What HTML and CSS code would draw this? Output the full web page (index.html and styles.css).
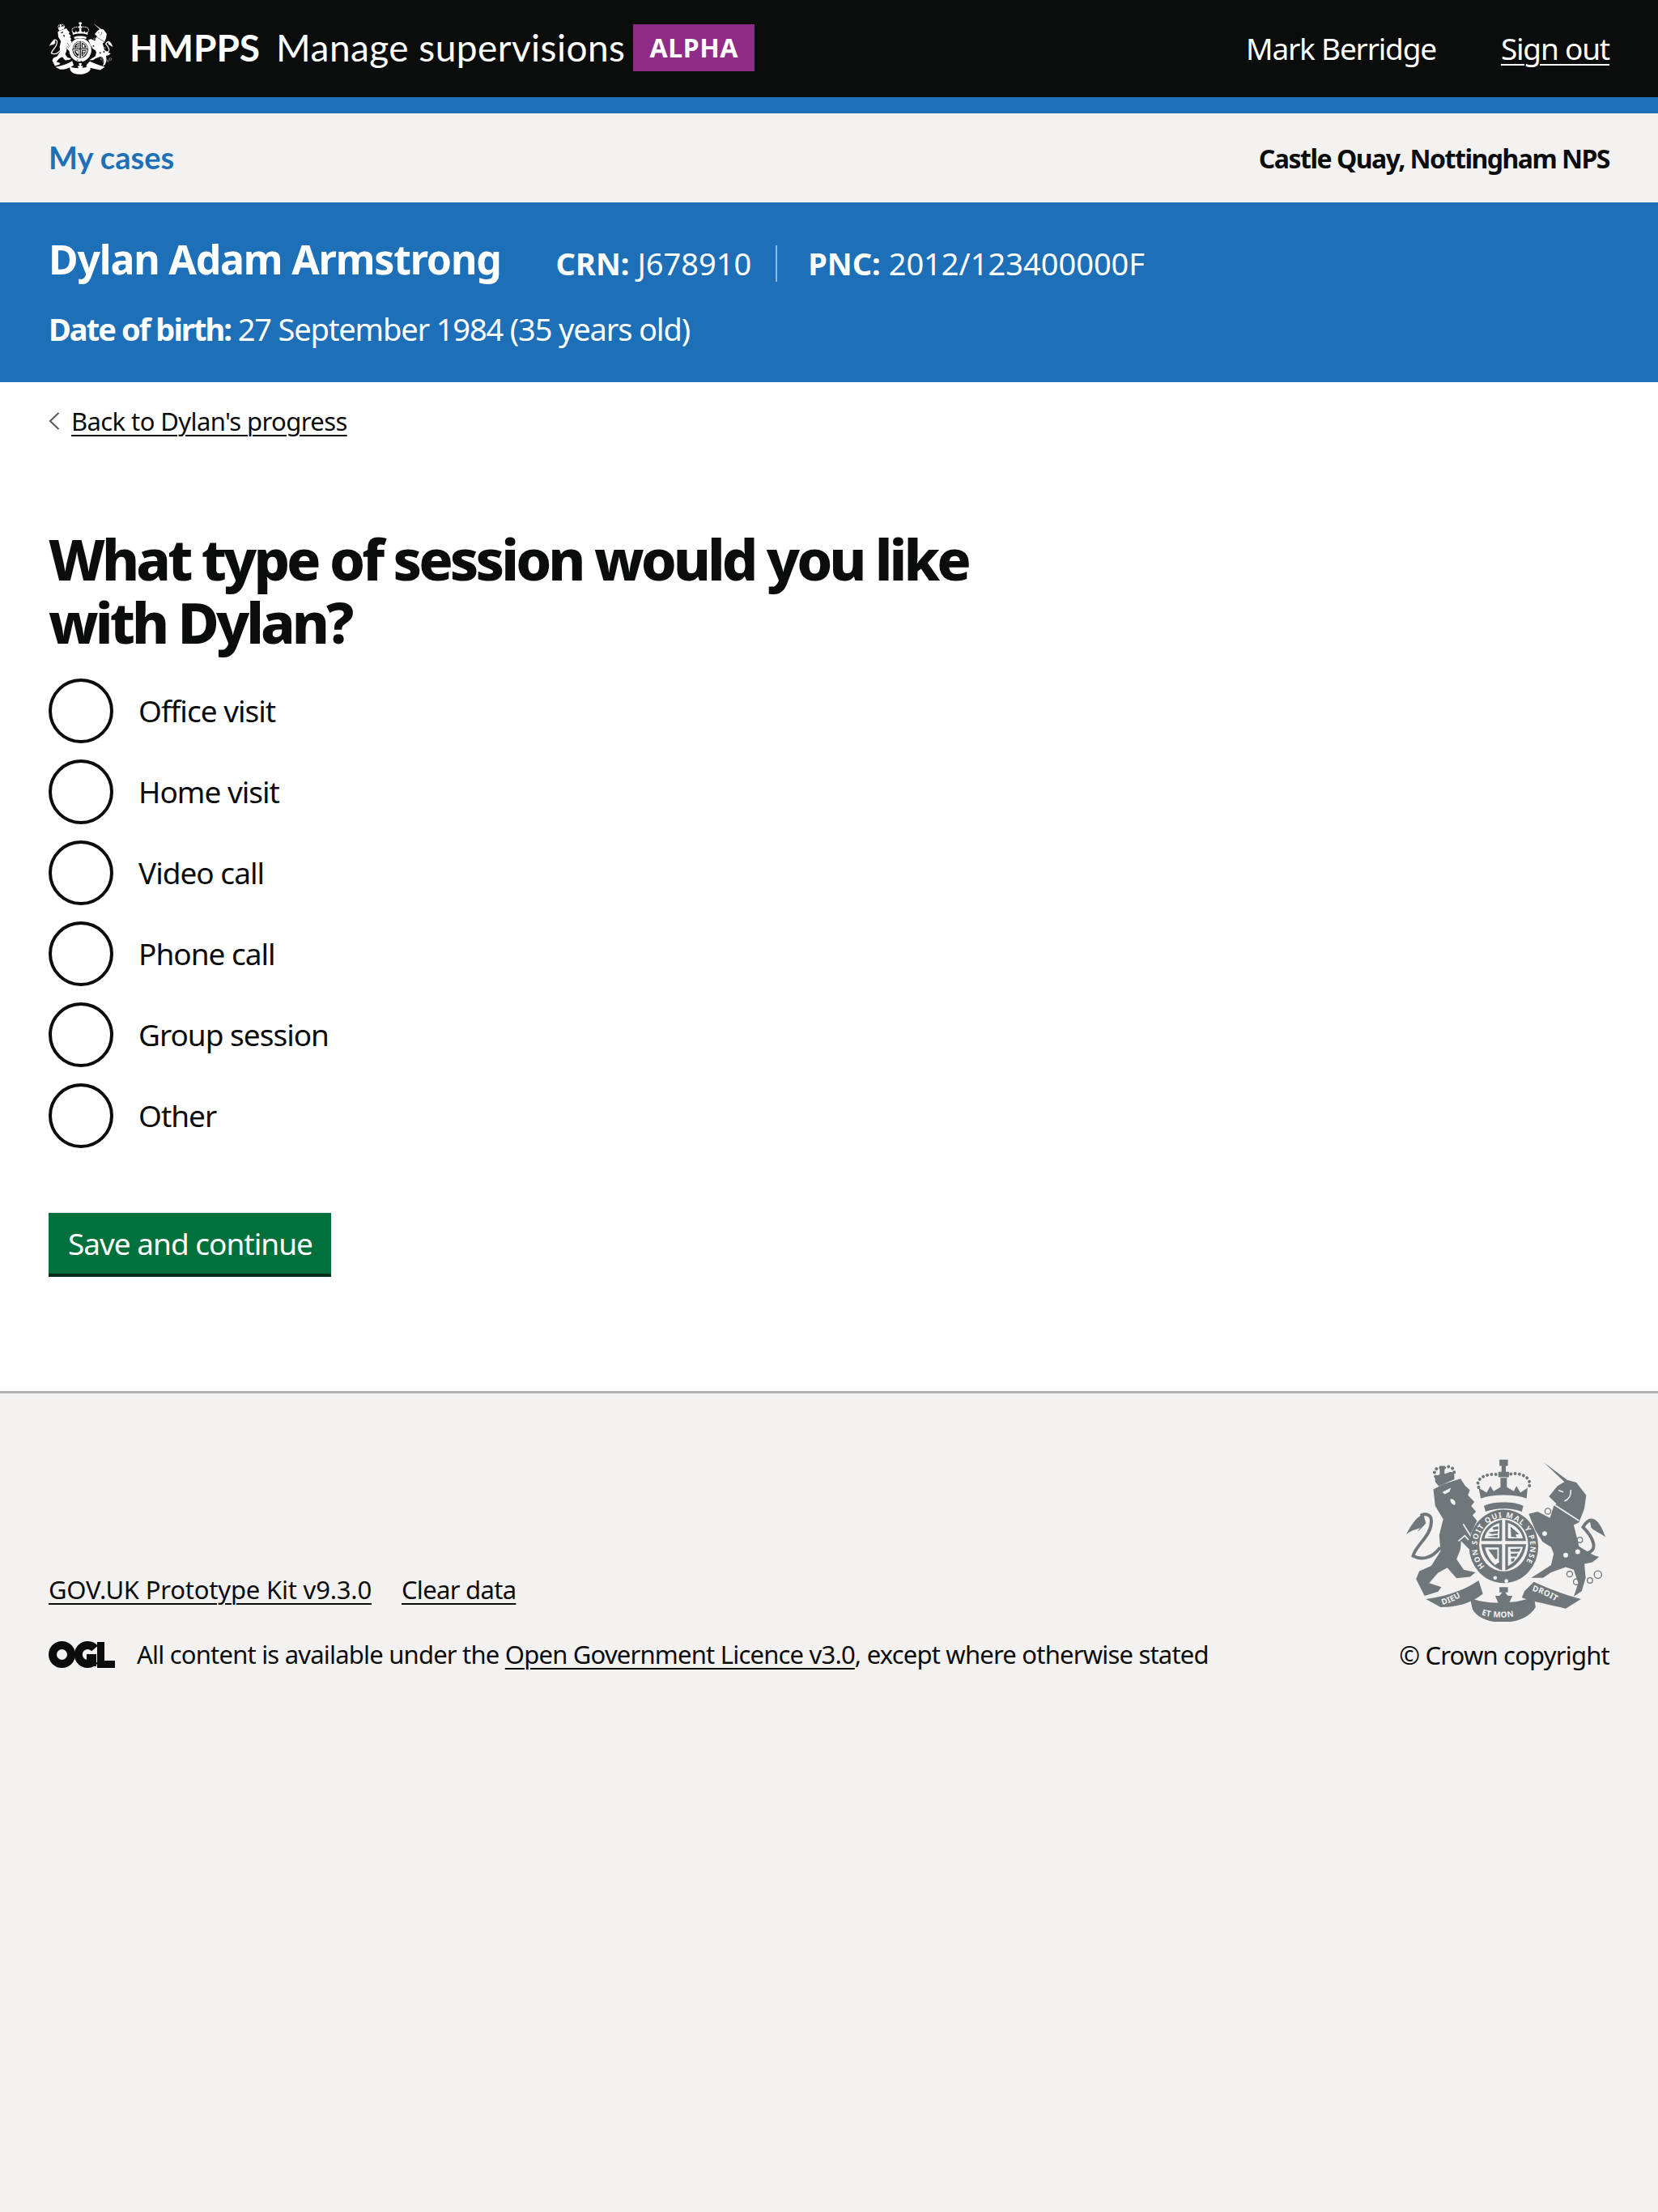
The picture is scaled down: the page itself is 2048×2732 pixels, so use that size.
FILE: index.html
```html
<!DOCTYPE html>
<html lang="en">
<head>
    <meta charset="UTF-8">
    <meta name="viewport" content="width=device-width, initial-scale=1.0">
    <title>What type of session would you like with Dylan?</title>
    <link rel="stylesheet" href="styles.css">
</head>
<body>
    <svg class="defs" width="0" height="0" aria-hidden="true">
        <defs>
            <g id="crest-shapes">
                <!-- lion -->
                <path d="M198 178 L232 160 L300 138 L318 165 L335 180 L328 200 L352 225 L340 240 L358 262 L345 275 L362 296 L338 345 L368 395 L362 422 L332 402 L302 372 L300 402 L285 440 L312 480 L356 490 L336 506 L285 512 L250 472 L215 492 L182 530 L228 545 L216 562 L165 578 L133 515 L145 485 L190 465 L225 410 L220 350 L235 290 L205 240 Z"/>
                <path class="crest-line" d="M224 396 C190 442 150 442 122 428 C130 388 196 350 190 292 C188 270 165 268 150 276"/>
                <path d="M160 270 C130 285 110 320 96 347 C118 330 135 330 150 322 C128 345 140 340 170 305 Z"/>
                <path class="crest-dots" d="M206 130 C190 100 225 90 235 100 C250 85 285 95 274 125"/>
                <path d="M222 90 H240 V120 L262 112 L276 116 L277 140 L218 166 L205 150 L204 128 L222 122 Z"/>
                <path class="crest-cut" d="M232 188 L264 172 L258 188 L240 196 Z M262 214 C272 212 284 222 280 236 C270 238 260 226 262 214 Z"/>
                <path class="crest-cut-line" d="M310 308 L362 392 M292 372 L316 352 L330 368"/>
                <!-- crown -->
                <path d="M446 66 H478 V90 H470 V120 H454 V90 H446 Z"/>
                <path d="M442 112 H482 V132 H442 Z"/>
                <path class="crest-dots" d="M368 170 C350 130 420 112 450 126 M474 126 C510 106 575 130 556 172"/>
                <path d="M450 135 H474 V170 L500 185 L510 165 L525 190 L552 172 L548 212 C500 195 425 195 376 212 L368 172 L398 190 L412 165 L424 185 L450 170 Z"/>
                <path d="M388 240 C420 222 505 222 536 240 L530 262 C495 246 430 246 394 262 Z"/>
                <!-- garter and shield -->
                <ellipse cx="462" cy="392" rx="130" ry="138"/>
                <ellipse class="crest-cut" cx="462" cy="386" rx="92" ry="100"/>
                <path d="M378 372 C382 330 415 298 456 292 V372 Z M468 292 C510 298 542 330 546 372 H468 Z M378 384 H456 V482 C415 470 382 430 378 384 Z M468 384 H546 C542 430 510 470 468 482 Z"/>
                <path class="crest-cut" d="M390 362 C394 335 418 312 446 304 V362 Z M478 304 C505 312 530 335 534 362 H478 Z M478 394 H534 C528 425 505 452 478 466 Z"/>
                <path d="M404 340 L440 334 V344 L418 346 Z M398 356 L440 348 V358 Z M420 322 L442 316 V328 L424 330 Z M488 318 L520 346 L506 348 L512 358 L490 356 Z M486 402 L526 400 L520 412 L490 412 Z M488 420 L516 418 L510 430 L490 430 Z M490 438 L504 436 L500 448 L490 450 Z"/>
                <path class="crest-cut" d="M392 396 H444 V452 L430 462 C410 445 396 420 392 396 Z"/>
                <path class="crest-cut-line" d="M400 396 L444 452"/>
                <path d="M404 404 L432 442 L438 436 V404 Z"/>
                <circle class="crest-cut" cx="430" cy="510" r="7"/>
                <circle class="crest-cut" cx="472" cy="522" r="7"/>
                <!-- unicorn -->
                <path d="M612 76 L700 142 L735 152 L772 200 L765 250 L745 302 L725 312 L745 392 L800 425 L820 432 L795 452 L765 458 L770 510 L755 560 L725 580 L742 530 L725 480 L695 470 L640 490 L610 510 L565 510 L598 490 L640 462 L650 420 L640 395 L608 375 L580 330 L556 270 L590 262 L636 285 L650 240 L660 232 L632 205 L664 165 L690 150 Z"/>
                <path class="crest-line" d="M765 420 C830 410 790 350 760 320 C790 270 815 300 832 342"/>
                <path d="M785 292 C810 290 830 320 845 358 C825 340 800 335 790 320 Z"/>
                <path class="crest-cut-line" d="M652 236 L745 296 M668 182 L686 188 M690 222 C706 216 716 200 714 180"/>
                <circle class="crest-ring" cx="628" cy="260" r="11"/>
                <circle class="crest-hole" cx="616" cy="344" r="11"/>
                <circle class="crest-hole" cx="748" cy="368" r="10"/>
                <circle class="crest-ring" cx="710" cy="496" r="11"/>
                <circle class="crest-ring" cx="735" cy="525" r="11"/>
                <circle class="crest-ring" cx="786" cy="520" r="10"/>
                <circle class="crest-ring" cx="816" cy="498" r="14"/>
                <circle class="crest-cut" cx="695" cy="425" r="9"/>
                <circle class="crest-cut" cx="740" cy="412" r="9"/>
                <!-- motto scroll -->
                <path d="M170 590 C240 580 310 560 368 520 L384 570 C345 600 300 620 225 620 Z"/>
                <path d="M335 582 C370 612 540 612 575 575 L582 620 C540 695 380 695 345 628 Z"/>
                <path d="M540 560 L575 525 C620 545 680 570 752 590 L695 626 C640 612 570 600 530 585 Z"/>
                <path d="M446 545 H478 V565 H446 Z M462 558 L478 578 L495 578 L480 610 L462 622 L444 610 L430 578 L446 578 Z"/>
            </g>
        </defs>
    </svg>

    <header class="top-bar">
        <div class="logo">
            <svg class="logo-crest" viewBox="90 55 760 620" aria-hidden="true"><use href="#crest-shapes"/></svg>
            <span class="logo-org">HMPPS</span>
            <span class="logo-service">Manage supervisions</span>
            <strong class="tag">ALPHA</strong>
        </div>
        <nav class="account">
            <span>Mark Berridge</span>
            <a href="#">Sign out</a>
        </nav>
    </header>

    <div class="sub-nav">
        <a class="sub-nav-link" href="#">My cases</a>
        <strong class="sub-nav-team">Castle Quay, Nottingham NPS</strong>
    </div>

    <section class="person">
        <div class="person-row">
            <h2 class="person-name">Dylan Adam Armstrong</h2>
            <p class="person-crn"><strong>CRN:</strong> J678910</p>
            <p class="person-pnc"><strong>PNC:</strong> 2012/123400000F</p>
        </div>
        <p class="person-dob"><strong>Date of birth:</strong> 27 September 1984 (35 years old)</p>
    </section>

    <main class="page">
        <a class="back-link" href="#">
            <svg class="back-icon" viewBox="0 0 14 22" aria-hidden="true"><path d="M12.5 1 L2 11 L12.5 21"/></svg>
            <span>Back to Dylan's progress</span>
        </a>

        <form>
            <h1 class="question">What type of session would you like with Dylan?</h1>
            <div class="radios">
                <label class="radio"><input type="radio" name="type"> Office visit</label>
                <label class="radio"><input type="radio" name="type"> Home visit</label>
                <label class="radio"><input type="radio" name="type"> Video call</label>
                <label class="radio"><input type="radio" name="type"> Phone call</label>
                <label class="radio"><input type="radio" name="type"> Group session</label>
                <label class="radio"><input type="radio" name="type"> Other</label>
            </div>
            <button class="button" type="button">Save and continue</button>
        </form>
    </main>

    <footer class="footer">
        <div class="footer-meta">
            <div class="footer-links">
                <a href="#">GOV.UK Prototype Kit v9.3.0</a>
                <a href="#">Clear data</a>
            </div>
            <div class="licence">
                <svg class="ogl" viewBox="0 0 82 33" aria-hidden="true">
                    <circle cx="16.5" cy="16.5" r="11.5" fill="none" stroke="#0b0c0c" stroke-width="10"/>
                    <path d="M57 9 A11.5 11.5 0 1 0 57 24" fill="none" stroke="#0b0c0c" stroke-width="10"/>
                    <path d="M47 16 H59 V31 H47 Z M60 1 H69 V24 H82 V33 H60 Z" fill="#0b0c0c"/>
                </svg>
                <span>All content is available under the <a href="#">Open Government Licence v3.0</a>, except where otherwise stated</span>
            </div>
        </div>
        <div class="copyright">
            <svg class="footer-crest" viewBox="90 55 760 620" aria-hidden="true">
                <use href="#crest-shapes"/>
                <defs>
                    <path id="garter-arc" d="M391 468 A100 108 0 1 1 533 468"/>
                    <path id="dieu-arc" d="M232 612 C275 600 310 580 342 550"/>
                    <path id="mon-arc" d="M378 648 C420 664 500 664 548 640"/>
                    <path id="droit-arc" d="M568 558 C610 570 650 590 682 616"/>
                </defs>
                <text class="crest-text crest-garter"><textPath href="#garter-arc" textLength="470">HON SOIT QUI MAL Y PENSE</textPath></text>
                <text class="crest-text"><textPath href="#dieu-arc">DIEU</textPath></text>
                <text class="crest-text"><textPath href="#mon-arc">ET MON</textPath></text>
                <text class="crest-text"><textPath href="#droit-arc">DROIT</textPath></text>
            </svg>
            <span>© Crown copyright</span>
        </div>
    </footer>
</body>
</html>
```

FILE: styles.css
```css
* {
    box-sizing: border-box;
}

body {
    margin: 0;
    min-height: 2732px;
    background: #f3f2f1;
    color: #0b0c0c;
    font-family: "Noto Sans", Arial, sans-serif;
    font-size: 37px;
    line-height: 50px;
    letter-spacing: -1px;
    display: flex;
    flex-direction: column;
}

a {
    color: inherit;
    text-underline-offset: 5px;
    text-decoration-thickness: 2px;
}

.defs {
    position: absolute;
}

/* top bar */
.top-bar {
    height: 140px;
    padding: 0 60px;
    background: #0b0c0c;
    border-bottom: 20px solid #1d70b8;
    color: #fff;
    display: flex;
    justify-content: space-between;
    align-items: center;
}

.logo {
    display: flex;
    align-items: center;
    padding-bottom: 2px;
    letter-spacing: 0;
}

.logo-crest {
    width: 80px;
    height: 68px;
    fill: currentColor;
    margin-right: 20px;
    --crest-cut: #0b0c0c;
    --crest-ink: #fff;
}

.logo-org {
    font-family: Lato, sans-serif;
    font-weight: 700;
    font-size: 46px;
    margin-right: 20px;
}

.logo-service {
    font-family: Lato, sans-serif;
    font-size: 46px;
    letter-spacing: 0.45px;
    margin-right: 10px;
}

.tag {
    background: #912b88;
    height: 58px;
    padding: 0 20px;
    font-size: 32px;
    letter-spacing: 0.6px;
    line-height: 58px;
}

.account {
    display: flex;
    gap: 80px;
    letter-spacing: -1.2px;
}

/* crest pieces */
.crest-line {
    fill: none;
    stroke: var(--crest-ink);
    stroke-width: 12;
}

.crest-dots {
    fill: none;
    stroke: var(--crest-ink);
    stroke-width: 12;
    stroke-linecap: round;
    stroke-dasharray: 0.1 16;
}

.crest-cut {
    fill: var(--crest-cut);
}

.crest-cut-line {
    fill: none;
    stroke: var(--crest-cut);
    stroke-width: 5;
}

.crest-ring {
    fill: none;
    stroke: var(--crest-ink);
    stroke-width: 4;
}

.crest-hole {
    fill: var(--crest-cut);
    stroke: var(--crest-ink);
    stroke-width: 4;
}

.crest-text {
    fill: #f3f2f1;
    font-size: 30px;
    font-family: "Noto Sans", sans-serif;
    font-weight: 700;
    letter-spacing: 1px;
}

.crest-garter {
    font-size: 28px;
    letter-spacing: 0;
}

/* case nav */
.sub-nav {
    height: 110px;
    padding: 0 60px;
    background: #f3f2f1;
    display: flex;
    justify-content: space-between;
    align-items: center;
}

.sub-nav-link {
    margin-bottom: 2px;
    font-family: Lato, sans-serif;
    font-weight: 700;
    font-size: 38px;
    letter-spacing: 0;
    color: #1d70b8;
    text-decoration: none;
}

.sub-nav-team {
    margin-top: 2px;
    font-size: 32px;
    letter-spacing: -1.5px;
}

/* person banner */
.person {
    height: 222px;
    padding: 40px 60px 0;
    background: #1d70b8;
    color: #fff;
}

.person p {
    margin: 0;
}

.person-row {
    display: flex;
    align-items: center;
    height: 60px;
    font-size: 38px;
    letter-spacing: 0;
}

.person-name {
    margin: 0 68px 0 0;
    font-size: 50px;
    line-height: 60px;
    letter-spacing: -1.2px;
}

.person-row p {
    margin-top: 10px;
    line-height: 45px;
}

.person-crn {
    height: 45px;
    padding-right: 30px;
    margin-right: 38px !important;
    border-right: 2px solid #8eb8dc;
}

.person-dob {
    margin-top: 31px !important;
    font-size: 38px;
    letter-spacing: -1.15px;
}

.person-dob strong {
    letter-spacing: -1.95px;
}

/* page body */
.page {
    background: #fff;
    height: 1246px;
    padding: 28px 60px 0;
}

.back-link {
    display: flex;
    align-items: center;
    gap: 14px;
    font-size: 31px;
    line-height: 40px;
    letter-spacing: -0.6px;
    text-decoration: none;
}

.back-link span {
    text-decoration: underline;
    text-decoration-thickness: 2px;
}

.back-icon {
    width: 14px;
    height: 22px;
    fill: none;
    stroke: #505a5f;
    stroke-width: 2;
}

.question {
    width: 1200px;
    margin: 111px 0 31px;
    font-size: 70px;
    font-weight: 800;
    line-height: 78px;
    letter-spacing: -3.9px;
}

.radios {
    display: flex;
    flex-direction: column;
    gap: 20px;
}

.radio {
    display: flex;
    align-items: center;
    gap: 31px;
    height: 80px;
}

.radio input {
    appearance: none;
    width: 80px;
    height: 80px;
    margin: 0;
    border: 4px solid #0b0c0c;
    border-radius: 50%;
    background: #fff;
}

.button {
    display: block;
    margin-top: 80px;
    height: 75px;
    padding: 0 23px 0 24px;
    border: 0;
    background: #00703c;
    box-shadow: 0 4px 0 #002d18;
    color: #fff;
    font-family: inherit;
    font-size: 37px;
    letter-spacing: -1px;
}

/* footer */
.footer {
    flex: 1;
    padding: 78px 60px 0;
    border-top: 3px solid #b1b4b6;
    background: #f3f2f1;
    font-size: 31px;
    line-height: 40px;
    letter-spacing: -0.8px;
    display: flex;
    justify-content: space-between;
    align-items: flex-start;
}

.footer-meta {
    margin-top: 144px;
}

.footer-links {
    display: flex;
    gap: 37px;
    margin-bottom: 40px;
    letter-spacing: -0.2px;
}

.footer-links a:last-child {
    letter-spacing: -0.7px;
}

.licence {
    display: flex;
    align-items: center;
    gap: 27px;
}

.ogl {
    flex-shrink: 0;
    width: 82px;
    height: 33px;
}

.copyright {
    display: flex;
    flex-direction: column;
    align-items: flex-end;
}

.footer-crest {
    width: 250px;
    height: 204px;
    margin: 0 3px 21px 0;
    fill: #6f777b;
    --crest-cut: #f3f2f1;
    --crest-ink: #6f777b;
}
```
